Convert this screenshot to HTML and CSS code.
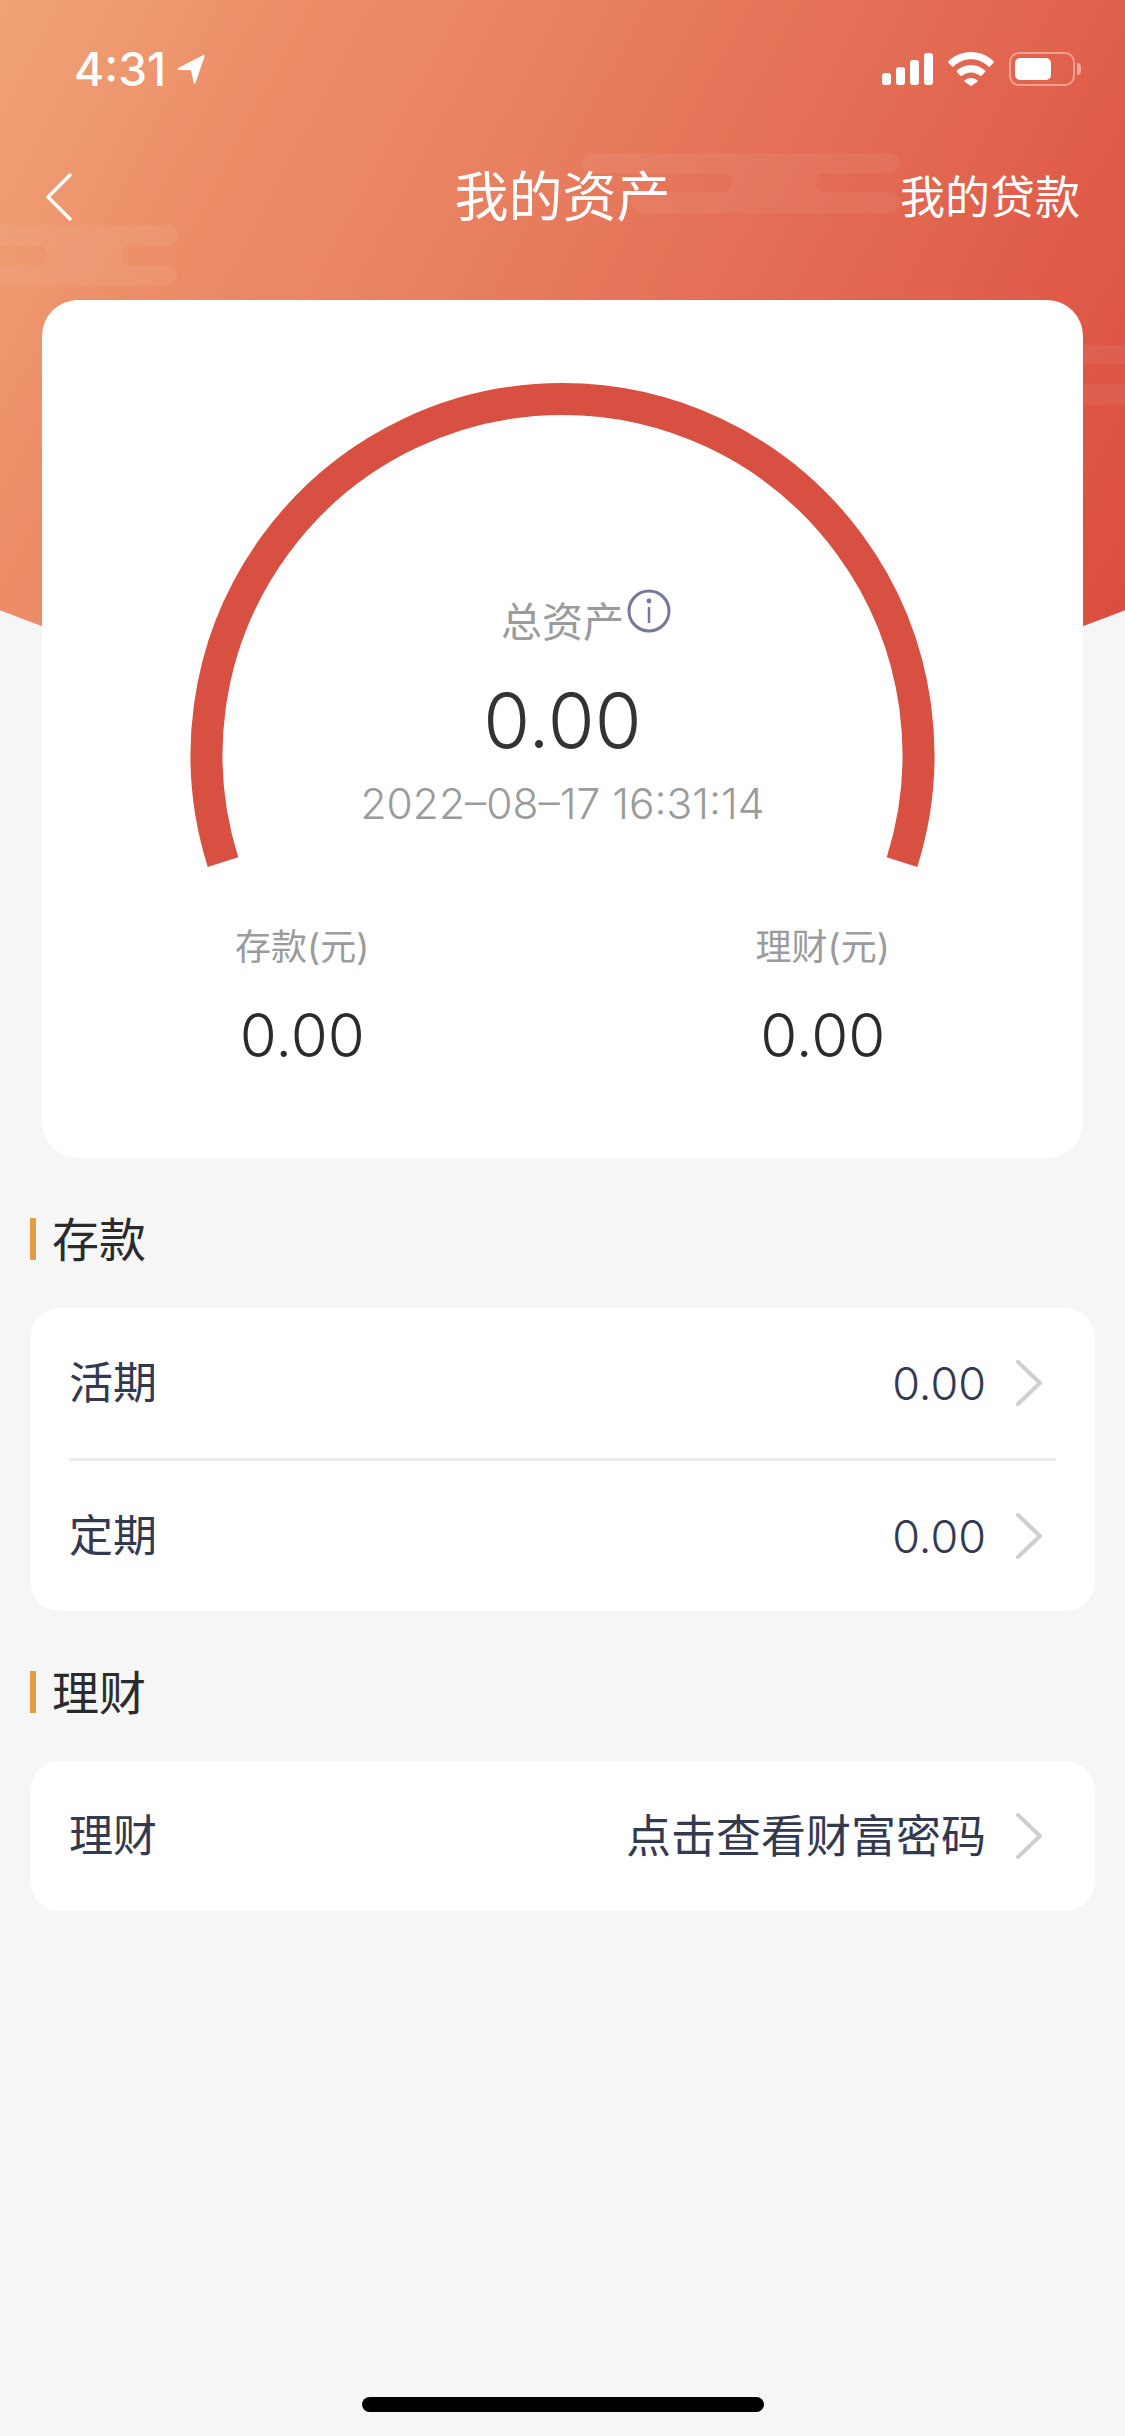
FILE: index.html
```html
<!doctype html>
<html>

<head>
    <meta charset="utf-8">
    <meta name="viewport" content="width=device-width, initial-scale=1">
    <title>我的资产</title>
    <link rel="stylesheet" href="styles.css">
</head>

<body>
    <div class="page">
        <div class="hero">
            <svg class="clouds" width="1125" height="710" viewBox="0 0 1125 710">
                <path d="M592 153H890a10 10 0 0 1 0 20H823a10 10 0 0 0 0 19H890a10 10 0 0 1 0 21H642a10 10 0 0 1 0-21H725a10 10 0 0 0 0-19H592a10 10 0 0 1 0-20Z"/>
                <path d="M0 225H167a10 10 0 0 1 0 21H128a10 10 0 0 0 0 19H167a10 10 0 0 1 0 20H0V265H40a10 10 0 0 0 0-19H0Z"/>
                <path d="M1083 345H1125V364H1083Z"/>
                <path d="M1083 384H1125V405H1083Z"/>
            </svg>
        </div>

        <div class="status">
            <div class="status-left">
                <span class="time">4:31</span>
                <svg width="30" height="31" viewBox="0 0 28 30">
                    <path d="M1.500 13.500 25.500 1.200c1-.5 1.900.3 1.600 1.300L18.300 28c-.3 1-1.500 1-1.700 0l-2.600-12.200L2 15.600c-1.100-.1-1.400-1.500-.5-2.100Z" fill="#fff"/>
                </svg>
            </div>
            <div class="status-right">
                <div class="signal">
                    <i class="bar1"></i><i class="bar2"></i><i class="bar3"></i><i class="bar4"></i>
                </div>
                <svg width="46" height="34" viewBox="0 0 46 34">
                    <path d="M23 0C14 0 6.300 3.500 .6 9.100c-.5.500-.5 1.100 0 1.600l3.500 3.700c.4.400 1 .4 1.500 0C10.200 10 16.300 7.300 23 7.300S35.800 10 40.400 14.400c.5.400 1.100.4 1.500 0l3.500-3.700c.5-.5.500-1.100 0-1.600C39.700 3.500 32 0 23 0Z" fill="#fff"/>
                    <path d="M23 13c-5.500 0-10.400 2.100-14 5.600-.5.400-.5 1-.1 1.500l3.600 3.700c.4.400 1 .4 1.500 0 2.400-2.100 5.500-3.400 9-3.400s6.600 1.300 9 3.400c.5.400 1.100.4 1.500 0l3.600-3.700c.4-.5.400-1.100-.1-1.500C33.400 15.100 28.500 13 23 13Z" fill="#fff"/>
                    <path d="M23 26c-2.500 0-4.700.9-6.400 2.400-.5.4-.5 1-.1 1.400l5.700 3.800c.5.500 1.100.5 1.600 0l5.700-3.800c.4-.4.400-1-.1-1.400C27.700 26.900 25.500 26 23 26Z" fill="#fff"/>
                </svg>
                <div class="battery">
                    <div class="battery-body"><div class="battery-fill"></div></div>
                    <div class="battery-cap"></div>
                </div>
            </div>
        </div>

        <div class="nav">
            <svg class="back" width="27" height="48" viewBox="0 0 27 48">
                <path d="M25 2 3 24 25 46" fill="none" stroke="#fff" stroke-width="3.500" stroke-linecap="round" stroke-linejoin="round"/>
            </svg>
            <div class="nav-title">我的资产</div>
            <div class="nav-link">我的贷款</div>
        </div>

        <div class="summary">
            <div class="gauge">
                <svg class="arc" width="1041" height="583" viewBox="0 0 1041 583">
                    <path d="M181 562.100A356 356 0 1 1 860 562.100" fill="none" stroke="#d85042" stroke-width="32"/>
                </svg>
                <div class="total-label">
                    <span>总资产</span>
                    <svg class="info" width="44" height="44" viewBox="0 0 44 44">
                        <circle cx="22" cy="22" r="20" fill="none" stroke="#74789a" stroke-width="3"/>
                        <circle cx="22" cy="12" r="2.400" fill="#74789a"/>
                        <path d="M22 18V34" stroke="#74789a" stroke-width="2.500"/>
                    </svg>
                </div>
                <div class="total-value">0.00</div>
                <div class="total-date">2022–08–17 16:31:14</div>
            </div>
            <div class="stats">
                <div class="stat">
                    <div class="stat-label">存款(元)</div>
                    <div class="stat-value">0.00</div>
                </div>
                <div class="stat">
                    <div class="stat-label">理财(元)</div>
                    <div class="stat-value">0.00</div>
                </div>
            </div>
        </div>

        <div class="section-head">存款</div>
        <div class="list">
            <div class="row">
                <span class="row-label">活期</span>
                <span class="row-value">0.00</span>
                <svg class="chevron" width="26" height="46" viewBox="0 0 26 46"><path d="M2 2 24 23 2 44" fill="none" stroke="#cfcfcf" stroke-width="4" stroke-linecap="round" stroke-linejoin="round"/></svg>
            </div>
            <div class="divider"></div>
            <div class="row">
                <span class="row-label">定期</span>
                <span class="row-value">0.00</span>
                <svg class="chevron" width="26" height="46" viewBox="0 0 26 46"><path d="M2 2 24 23 2 44" fill="none" stroke="#cfcfcf" stroke-width="4" stroke-linecap="round" stroke-linejoin="round"/></svg>
            </div>
        </div>

        <div class="section-head">理财</div>
        <div class="list">
            <div class="row">
                <span class="row-label">理财</span>
                <span class="row-link">点击查看财富密码</span>
                <svg class="chevron" width="26" height="46" viewBox="0 0 26 46"><path d="M2 2 24 23 2 44" fill="none" stroke="#cfcfcf" stroke-width="4" stroke-linecap="round" stroke-linejoin="round"/></svg>
            </div>
        </div>

        <div class="home-bar"></div>
    </div>
</body>

</html>
```

FILE: styles.css
```css
* {
    box-sizing: border-box;
}
body {
    margin: 0;
    background-color: #f6f6f6;
    font-family: 'Inter', 'Noto Sans CJK SC', sans-serif;
}
.page {
    position: relative;
    display: flex;
    flex-direction: column;
    height: 2436px;
    overflow: hidden;
}
.hero {
    position: absolute;
    top: 0;
    left: 0;
    width: 1125px;
    height: 710px;
    background: linear-gradient(118deg, #f0a377 0%, #ec8d68 21%, #e88262 37%, #e0604c 75%, #db4e3e 96%);
    clip-path: circle(1550px at 562.5px -834px);
}
.clouds {
    display: block;
    fill: rgba(255, 255, 255, 0.055);
}

/* status bar */
.status {
    position: relative;
    display: flex;
    justify-content: space-between;
    align-items: center;
    height: 138px;
    padding: 0 44px 0 74px;
}
.status-left {
    display: flex;
    align-items: center;
    gap: 10px;
}
.time {
    font-size: 46px;
    font-weight: 500;
    color: #fff;
    line-height: 50px;
}
.status-right {
    display: flex;
    align-items: center;
    gap: 15px;
}
.signal {
    display: flex;
    align-items: flex-end;
    gap: 5px;
    height: 32px;
}
.signal i {
    display: block;
    width: 9px;
    background-color: #fff;
    border-radius: 3px;
}
.bar1 { height: 12px; }
.bar2 { height: 18px; }
.bar3 { height: 25px; }
.bar4 { height: 32px; }
.battery {
    display: flex;
    align-items: center;
    gap: 2px;
}
.battery-body {
    width: 66px;
    height: 34px;
    padding: 4px;
    border: 2.5px solid rgba(255, 255, 255, 0.4);
    border-radius: 10px;
}
.battery-fill {
    width: 36px;
    height: 100%;
    background-color: #fff;
    border-radius: 5px;
}
.battery-cap {
    width: 4px;
    height: 12px;
    background-color: rgba(255, 255, 255, 0.45);
    border-radius: 0 4px 4px 0;
}

/* nav */
.nav {
    position: relative;
    display: grid;
    grid-template-columns: 1fr auto 1fr;
    align-items: center;
    height: 118px;
    padding: 0 45px;
    color: #fff;
}
.nav-title {
    padding-bottom: 8px;
    font-size: 54px;
}
.nav-link {
    padding-bottom: 6px;
    font-size: 45px;
    text-align: right;
}

/* summary card */
.summary {
    position: relative;
    height: 858px;
    margin: 44px 42px 0;
    background-color: #fff;
    border-radius: 36px;
}
.gauge {
    position: relative;
    display: flex;
    flex-direction: column;
    align-items: center;
    height: 583px;
    padding-top: 290px;
}
.arc {
    position: absolute;
    top: 0;
    left: 0;
}
.total-label {
    position: relative;
    height: 60px;
    font-size: 41px;
    line-height: 64px;
    color: #9b9b9b;
}
.info {
    position: absolute;
    top: -1px;
    left: 100%;
    margin-left: 3px;
}
.total-value {
    margin-top: 25px;
    font-size: 76px;
    font-weight: 300;
    line-height: 90px;
    color: #333;
}
.total-date {
    margin-top: 14px;
    font-size: 42.5px;
    font-weight: 300;
    line-height: 50px;
    color: #9b9b9b;
}
.stats {
    display: grid;
    grid-template-columns: 1fr 1fr;
    margin-top: 39px;
    text-align: center;
}
.stat-label {
    font-size: 36px;
    line-height: 50px;
    color: #9b9b9b;
}
.stat-value {
    margin-top: 28px;
    font-size: 60px;
    font-weight: 300;
    line-height: 70px;
    color: #2b2b2b;
}

/* lists */
.section-head {
    display: flex;
    align-items: center;
    height: 42px;
    margin: 60px 30px 0;
    padding: 0 0 6px 16px;
    border-left: 6px solid #e49c45;
    font-size: 47px;
    color: #2b2b2b;
}
.list {
    margin: 48px 30px 0;
    background-color: #fff;
    border-radius: 30px;
}
.row {
    display: flex;
    align-items: center;
    height: 150px;
    padding: 0 53px 0 39px;
    color: #33394f;
}
.row-label {
    flex: 1;
    padding-bottom: 6px;
    font-size: 44px;
}
.row-value {
    font-size: 45px;
    font-weight: 300;
}
.row-link {
    padding-bottom: 6px;
    font-size: 45px;
}
.chevron {
    margin-left: 30px;
}
.divider {
    height: 3px;
    margin: 0 39px;
    background-color: #ebebeb;
}
.home-bar {
    width: 402px;
    height: 15px;
    margin: auto auto 24px;
    background-color: #000;
    border-radius: 8px;
}
```
